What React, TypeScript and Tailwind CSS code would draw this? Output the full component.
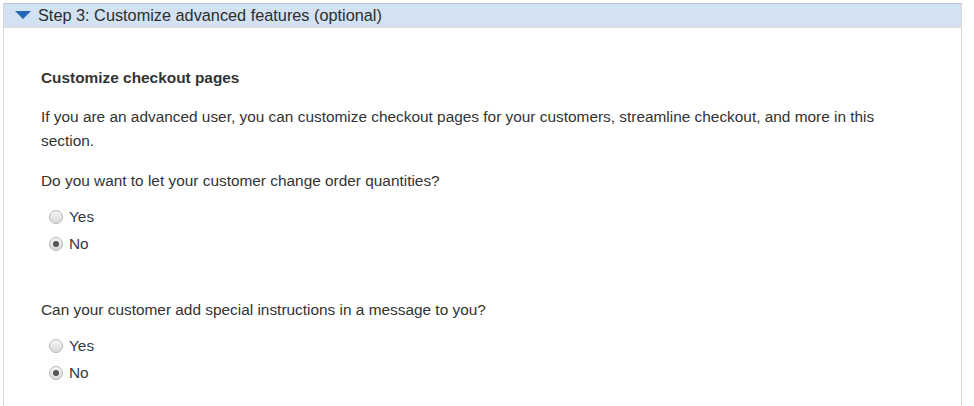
import React, { useState } from "react";

const questions = [
  { id: "qty", label: "Do you want to let your customer change order quantities?" },
  { id: "note", label: "Can your customer add special instructions in a message to you?" },
];

const Radio = ({ checked, onClick, label }: { checked: boolean; onClick: () => void; label: string }) => (
  <label className="flex items-center gap-[6px] h-[27px] cursor-pointer" onClick={onClick}>
    <span className="w-[14px] h-[14px] rounded-full border border-[#b5b5b5] bg-gradient-to-b from-[#f6f6f6] to-[#d9d9d9] flex items-center justify-center">
      {checked && <span className="w-[6px] h-[6px] rounded-full bg-[#555]" />}
    </span>
    <span className="text-[15.4px] text-[#333a44]">{label}</span>
  </label>
);

export default function App() {
  const [answers, setAnswers] = useState<Record<string, string>>({ qty: "no", note: "no" });

  return (
    <div className="w-[974px] h-[406px] bg-white overflow-hidden pt-[3px] pl-[3px] font-['Liberation_Sans',Arial,sans-serif]">
      <div className="w-[959px] h-[420px] border-x border-[#d6d6d6]">
        <div className="h-[25px] bg-[#d3e2f3] border-t border-[#b9c6d6] border-b-2 border-b-[#dadfe6] flex items-center pl-[11px] gap-[7px]">
          <svg width="16" height="8" viewBox="0 0 16 8">
            <path d="M0 0 L16 0 L8 8 Z" fill="#2467b5" />
          </svg>
          <span className="text-[16.3px] text-[#2d2d2d]">Step 3: Customize advanced features (optional)</span>
        </div>

        <div className="pl-[37px] pt-[40px] text-[15.4px] text-[#333]">
          <h3 className="font-bold leading-[20px]">Customize checkout pages</h3>
          <p className="mt-[17px] leading-[24px] w-[860px]">
            If you are an advanced user, you can customize checkout pages for your customers, streamline checkout, and more in this section.
          </p>

          {questions.map((q, i) => (
            <div key={q.id} className={i === 0 ? "mt-[18px]" : "mt-[43px]"}>
              <p className="leading-[20px]">{q.label}</p>
              <div className="mt-[12px] pl-[8px]">
                <Radio
                  checked={answers[q.id] === "yes"}
                  onClick={() => setAnswers({ ...answers, [q.id]: "yes" })}
                  label="Yes"
                />
                <Radio
                  checked={answers[q.id] === "no"}
                  onClick={() => setAnswers({ ...answers, [q.id]: "no" })}
                  label="No"
                />
              </div>
            </div>
          ))}
        </div>
      </div>
    </div>
  );
}
